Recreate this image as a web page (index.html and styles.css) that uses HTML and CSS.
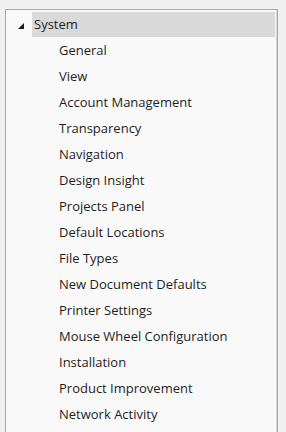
FILE: index.html
```html
<!DOCTYPE html>
<html lang="en">
<head>
  <meta charset="UTF-8">
  <title>Options</title>
  <link rel="stylesheet" href="styles.css">
</head>
<body>
  <div class="tree">
    <div class="node selected">
      <span class="toggle">
        <svg width="6" height="6" viewBox="0 0 6 6"><polygon points="6,0 6,6 0,6" fill="#1a1a1a"/></svg>
      </span>
      <span class="label">System</span>
    </div>
    <div class="children">
      <div class="leaf">General</div>
      <div class="leaf">View</div>
      <div class="leaf">Account Management</div>
      <div class="leaf">Transparency</div>
      <div class="leaf">Navigation</div>
      <div class="leaf">Design Insight</div>
      <div class="leaf">Projects Panel</div>
      <div class="leaf">Default Locations</div>
      <div class="leaf">File Types</div>
      <div class="leaf">New Document Defaults</div>
      <div class="leaf">Printer Settings</div>
      <div class="leaf">Mouse Wheel Configuration</div>
      <div class="leaf">Installation</div>
      <div class="leaf">Product Improvement</div>
      <div class="leaf">Network Activity</div>
    </div>
  </div>
</body>
</html>
```

FILE: styles.css
```css
body {
  margin: 0;
  padding: 9px 0 0 5px;
  background-color: #f0f0f0;
  font-family: "Open Sans", "Liberation Sans", sans-serif;
  font-size: 13px;
  color: #1e1e1e;
  height: 432px;
  box-sizing: border-box;
  overflow: hidden;
}

.tree {
  width: 273px;
  height: 440px;
  box-sizing: border-box;
  background: #f9f9f9;
  border: 1px solid #a9a9a9;
  border-bottom: none;
  padding: 2px 2px 0 0;
  box-shadow: inset -1px 0 0 #d4d4d4;
}

.node {
  display: flex;
  align-items: center;
  height: 25px;
}

.toggle {
  width: 26px;
  display: flex;
  justify-content: center;
  padding-left: 4px;
  box-sizing: border-box;
}

.toggle svg {
  display: block;
  margin-top: 2px;
}

.node .label {
  flex: 1;
  height: 25px;
  line-height: 24px;
  padding-left: 2px;
  background: #d9d9d9;
}

.children {
  padding-left: 53px;
}

.leaf {
  height: 26px;
  line-height: 26px;
}
```
